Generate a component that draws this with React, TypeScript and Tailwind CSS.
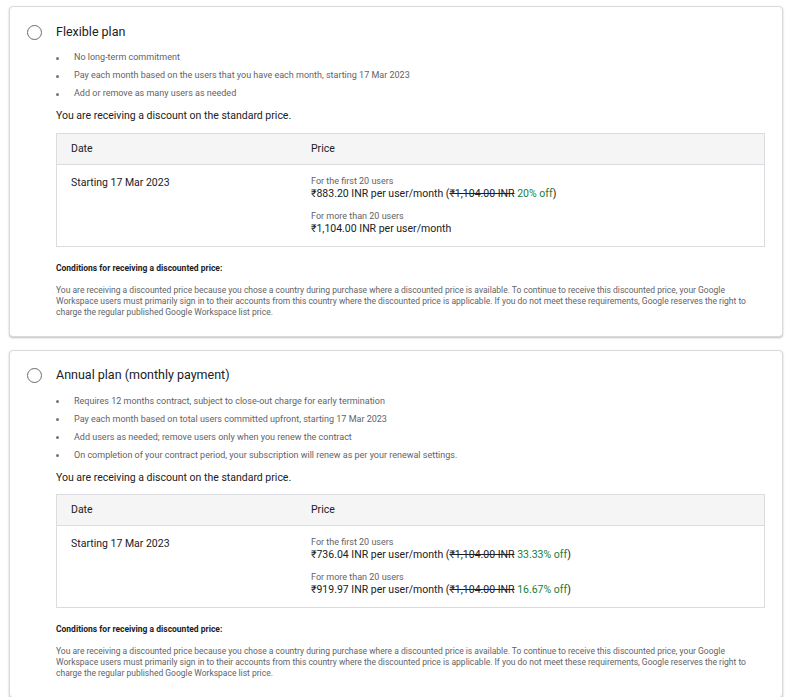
import React from "react";

type Tier = { label: string; price: string; old?: string; off?: string };
type Plan = { title: string; bullets: string[]; tiers: Tier[] };

const plans: Plan[] = [
  {
    title: "Flexible plan",
    bullets: [
      "No long-term commitment",
      "Pay each month based on the users that you have each month, starting 17 Mar 2023",
      "Add or remove as many users as needed",
    ],
    tiers: [
      { label: "For the first 20 users", price: "₹883.20 INR per user/month", old: "₹1,104.00 INR", off: "20% off" },
      { label: "For more than 20 users", price: "₹1,104.00 INR per user/month" },
    ],
  },
  {
    title: "Annual plan (monthly payment)",
    bullets: [
      "Requires 12 months contract, subject to close-out charge for early termination",
      "Pay each month based on total users committed upfront, starting 17 Mar 2023",
      "Add users as needed; remove users only when you renew the contract",
      "On completion of your contract period, your subscription will renew as per your renewal settings.",
    ],
    tiers: [
      { label: "For the first 20 users", price: "₹736.04 INR per user/month", old: "₹1,104.00 INR", off: "33.33% off" },
      { label: "For more than 20 users", price: "₹919.97 INR per user/month", old: "₹1,104.00 INR", off: "16.67% off" },
    ],
  },
];

function Card({ p }: { p: Plan }) {
  return (
    <div className="ml-[9px] mr-[13px] bg-white border border-[#dadada] rounded-[4px] shadow-[0_1px_2px_rgba(0,0,0,0.25)] pl-[17px] pt-[17px] pb-[18px]">
      <div className="flex items-center gap-[14px] h-[16px]">
        <div className="w-[15px] h-[15px] rounded-full border-[1.5px] border-[#6b6b6b]" />
        <div className="text-[12.5px] text-[#202124]">{p.title}</div>
      </div>
      <div className="pl-[29px]">
        <ul className="mt-[9px] text-[9px] text-[#5f6368] pl-[0px]">
          {p.bullets.map((b) => (
            <li key={b} className="h-[18px] flex items-center gap-[15px]">
              <span className="w-[3px] h-[3px] rounded-full bg-[#70757a]" />
              <span>{b}</span>
            </li>
          ))}
        </ul>
        <div className="mt-[5px] text-[10.5px] text-[#202124]">You are receiving a discount on the standard price.</div>
        <div className="mt-[9px] border border-[#dadce0] w-[709px]">
          <div className="flex h-[31px] items-center bg-[#f5f5f5] border-b border-[#dadce0] text-[10.5px] text-[#202124]">
            <div className="w-[254px] pl-[14px]">Date</div>
            <div>Price</div>
          </div>
          <div className="flex pt-[10px] pb-[10px]">
            <div className="w-[254px] pl-[14px] text-[10.5px] text-[#202124]">Starting 17 Mar 2023</div>
            <div className="flex flex-col gap-[9px]">
              {p.tiers.map((t) => (
                <div key={t.label}>
                  <div className="text-[9px] text-[#5f6368] leading-[12px]">{t.label}</div>
                  <div className="text-[10.5px] text-[#202124] leading-[14px]">
                    {t.price}
                    {t.old && (
                      <>
                        {" ("}
                        <span className="line-through">{t.old}</span>{" "}
                        <span className="text-[#188038]">{t.off}</span>)
                      </>
                    )}
                  </div>
                </div>
              ))}
            </div>
          </div>
        </div>
        <div className="mt-[15px] text-[8.5px] font-bold text-[#202124]">Conditions for receiving a discounted price:</div>
        <div className="mt-[10px] w-[710px] text-[8.5px] leading-[11px] text-[#5f6368]">
          You are receiving a discounted price because you chose a country during purchase where a discounted price is available. To continue to receive this discounted price, your Google Workspace users must primarily sign in to their accounts from this country where the discounted price is applicable. If you do not meet these requirements, Google reserves the right to charge the regular published Google Workspace list price.
        </div>
      </div>
    </div>
  );
}

export default function App() {
  return (
    <div className="w-[796px] h-[697px] bg-white pt-[6px] flex flex-col gap-[13px] overflow-hidden" style={{ fontFamily: "Roboto, 'Liberation Sans', sans-serif" }}>
      {plans.map((p) => (
        <Card key={p.title} p={p} />
      ))}
    </div>
  );
}
